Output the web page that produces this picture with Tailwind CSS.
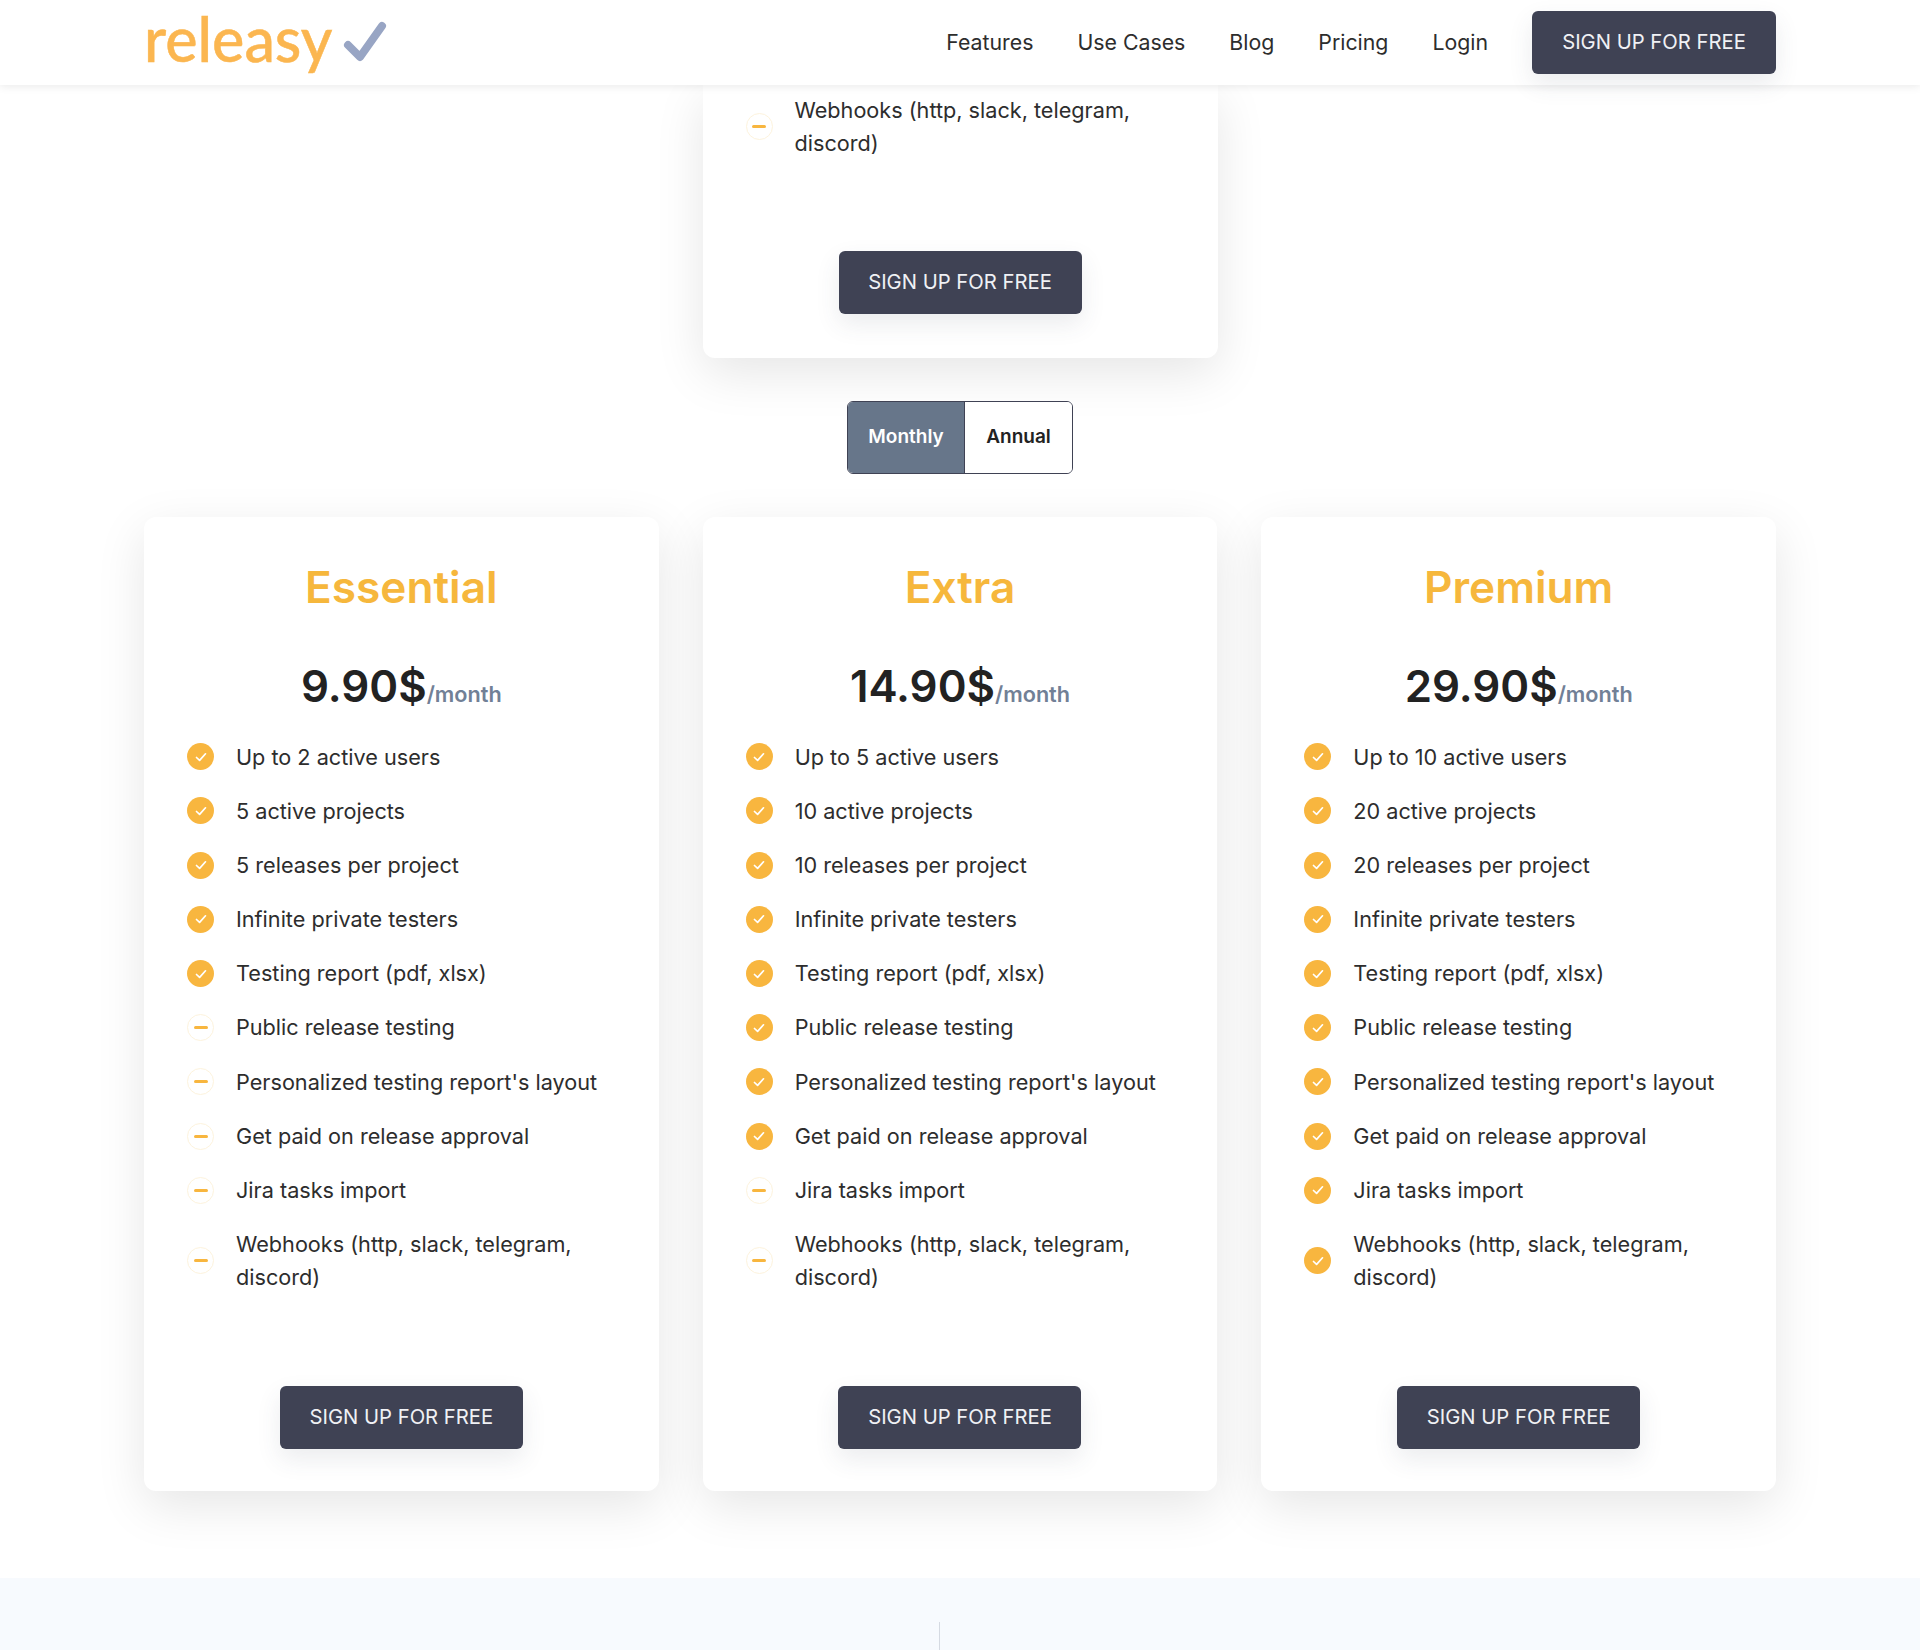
<!DOCTYPE html>
<html lang="en">
<head>
    <meta charset="UTF-8">
    <meta name="viewport" content="width=device-width, initial-scale=1.0">
    <title>Releasy - Pricing</title>
    <script src="https://cdn.jsdelivr.net/npm/@tailwindcss/browser@4"></script>
</head>
<body class="bg-white font-['Inter',sans-serif] text-[#2d2d2d] text-[21.65px] leading-[32.5px]">
    <div class="h-[1650px] overflow-hidden flex flex-col">
        <!-- Navbar -->
        <header class="relative z-10 h-[85px] shrink-0 bg-white shadow-[0_2px_8px_rgba(0,0,0,0.08)] px-[144px] flex items-center justify-between">
            <div class="flex items-center">
                <span class="font-['Lato',sans-serif] font-medium text-[61px] leading-[85px] text-[#fbb650] [-webkit-text-stroke:0.5px_#fbb650] -mt-[8px]">releasy</span>
                <svg class="ml-[11px]" width="48" height="48" viewBox="0 0 48 48" fill="none">
                    <path d="M5 26 L17 38 L39 7" stroke="#98a5c4" stroke-width="8" stroke-linecap="round" stroke-linejoin="round"/>
                </svg>
            </div>
            <nav class="flex items-center gap-[44px] text-[21.3px]">
                <a>Features</a>
                <a>Use Cases</a>
                <a>Blog</a>
                <a>Pricing</a>
                <a>Login</a>
                <a class="w-[244px] h-[63px] flex items-center justify-center rounded-md bg-[#3f4254] text-[20.25px] text-[#f0f1f5] shadow-[0_10px_24px_rgba(63,66,84,0.1)]">SIGN UP FOR FREE</a>
            </nav>
        </header>

        <main class="px-[144px] shrink-0">
            <!-- Carta tagliata dall'header -->
            <div class="w-[515px] mx-auto h-[273px] bg-white rounded-b-xl shadow-[0_15px_50px_rgba(0,0,0,0.1)] px-[43px] pt-[9px] flex flex-col items-center">
                <div class="w-full flex items-center gap-[22px]">
                    <span class="shrink-0 w-[27px] h-[27px] rounded-full border border-[#fdf3dd] flex items-center justify-center"><span class="w-[14px] h-[3px] rounded-full bg-[#f8b63f]"></span></span>
                    <span>Webhooks (http, slack, telegram, discord)</span>
                </div>
                <a class="mt-[92px] w-[243px] h-[63px] flex items-center justify-center rounded-md bg-[#3f4254] text-[20.25px] text-[#f0f1f5] shadow-[0_10px_24px_rgba(63,66,84,0.1)]">SIGN UP FOR FREE</a>
            </div>

            <!-- Monthly / Annual -->
            <div class="mt-[43px] mx-auto w-[226px] h-[73px] flex rounded-md border-[1.5px] border-[#3f4254] overflow-hidden text-[19px] font-semibold">
                <span class="w-[117px] bg-[#67768a] text-white flex items-center justify-center border-r-[1.5px] border-[#3f4254]">Monthly</span>
                <span class="flex-1 bg-white text-[#222222] flex items-center justify-center">Annual</span>
            </div>

            <div id="piani" class="mt-[43px] grid grid-cols-3 gap-[44px]"></div>
        </main>

        <!-- Footer band -->
        <div class="mt-[87px] flex-1 bg-[#f7fafe] pl-[939px] pt-[44px]">
            <div class="w-px h-full bg-[#d5dae2]"></div>
        </div>
    </div>

    <script>
        const iconaSi = `<span class="shrink-0 w-[27px] h-[27px] rounded-full bg-[#f8b63f] flex items-center justify-center"><svg width="14" height="14" viewBox="0 0 14 14" fill="none"><path d="M2.5 7.5 L5.6 10.4 L11.5 3.8" stroke="white" stroke-width="1.7" stroke-linecap="round" stroke-linejoin="round"/></svg></span>`;
        const iconaNo = `<span class="shrink-0 w-[27px] h-[27px] rounded-full border border-[#fdf3dd] flex items-center justify-center"><span class="w-[14px] h-[3px] rounded-full bg-[#f8b63f]"></span></span>`;

        const piani = [
            { nome: 'Essential', prezzo: '9.90$', utenti: 2, progetti: 5, rilasci: 5, attive: 5 },
            { nome: 'Extra', prezzo: '14.90$', utenti: 5, progetti: 10, rilasci: 10, attive: 8 },
            { nome: 'Premium', prezzo: '29.90$', utenti: 10, progetti: 20, rilasci: 20, attive: 10 }
        ];

        document.getElementById('piani').innerHTML = piani.map(p => {
            const voci = [
                `Up to ${p.utenti} active users`,
                `${p.progetti} active projects`,
                `${p.rilasci} releases per project`,
                'Infinite private testers',
                'Testing report (pdf, xlsx)',
                'Public release testing',
                "Personalized testing report's layout",
                'Get paid on release approval',
                'Jira tasks import',
                'Webhooks (http, slack, telegram, discord)'
            ];
            const righe = voci.map((v, i) => `
                <li class="flex items-center gap-[22px]">${i < p.attive ? iconaSi : iconaNo}<span>${v}</span></li>`).join('');
            return `
            <div class="h-[974px] bg-white rounded-xl shadow-[0_15px_50px_rgba(0,0,0,0.1)] px-[43px] flex flex-col items-center">
                <h2 class="mt-[44px] text-[44.2px] leading-[52px] font-semibold text-[#f6b73c]">${p.nome}</h2>
                <div class="mt-[46px] h-[56px] flex items-baseline justify-center">
                    <span class="text-[43.8px] leading-[56px] font-semibold text-[#222222]">${p.prezzo}</span><span class="font-semibold text-[#718096]">/month</span>
                </div>
                <ul class="mt-[25.5px] w-full flex flex-col gap-[21.7px]">${righe}</ul>
                <a class="mt-[92.5px] w-[243px] h-[63px] flex items-center justify-center rounded-md bg-[#3f4254] text-[20.25px] text-[#f0f1f5] shadow-[0_10px_24px_rgba(63,66,84,0.1)]">SIGN UP FOR FREE</a>
            </div>`;
        }).join('');
    </script>
</body>
</html>
